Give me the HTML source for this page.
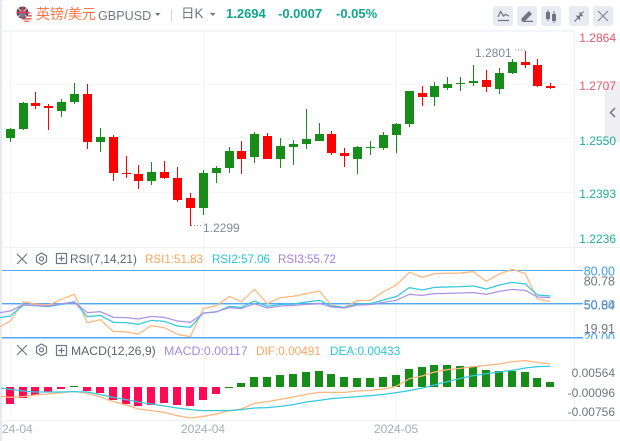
<!DOCTYPE html>
<html lang="zh">
<head>
<meta charset="utf-8">
<title>GBPUSD</title>
<style>
html,body{margin:0;padding:0;background:#fff;width:620px;height:441px;overflow:hidden}
svg{display:block;position:absolute;left:0;top:0}
text{font-family:"Liberation Sans","Noto Sans CJK SC",sans-serif;font-size:12px}
.c{shape-rendering:crispEdges}
.l{fill:none;stroke-width:1.25;vector-effect:non-scaling-stroke}
.i{fill:none;stroke:#6f7583;stroke-width:1.2}
</style>
</head>
<body>
<svg width="620" height="441" viewBox="0 0 620 441" xmlns="http://www.w3.org/2000/svg">
<rect width="620" height="441" fill="#fff"/>
<path d="M0 0H4Q2 0 2 4V441H0Z" fill="#e6e9f2"/>

<!-- grid -->
<g class="c" fill="#f4f5f8">
<rect x="10" y="30" width="1" height="390"/>
<rect x="203" y="30" width="1" height="390"/>
<rect x="396" y="30" width="1" height="390"/>
<rect x="3" y="30" width="571" height="2"/>
<rect x="3" y="84" width="571" height="1"/>
<rect x="3" y="138" width="571" height="1"/>
<rect x="3" y="192" width="571" height="1"/>
<rect x="3" y="247" width="617" height="1" fill="#eef0f4"/>
<rect x="3" y="420" width="617" height="1" fill="#eef0f4"/>
<rect x="574" y="30" width="1" height="390" fill="#eef0f4"/>
</g>

<!-- header -->
<g>
<clipPath id="f1"><circle cx="22.5" cy="12.5" r="6"/></clipPath>
<clipPath id="f2"><circle cx="26.5" cy="16.5" r="5.5"/></clipPath>
<g clip-path="url(#f2)"><rect x="20" y="10" width="14" height="13" fill="#fff"/><path d="M20 12h14v1.6H20zM20 15h14v1.6H20zM20 18h14v1.6H20zM20 20.6h14v1.6H20z" fill="#e0635f"/></g>
<g clip-path="url(#f1)"><rect x="16" y="6" width="13" height="13" fill="#3c4a78"/><path d="M16 6L29 19M29 6L16 19" stroke="#e8a9a9" stroke-width="1.5"/><path d="M22.5 6V19M16 12.5H29" stroke="#d9404a" stroke-width="2"/></g>
<rect x="20" y="13" width="5" height="4" fill="#6f7890"/>
<text x="36" y="19" style="font-size:14px" fill="#ff7547">英镑/美元</text>
<text x="98" y="20" style="font-size:12.6px" fill="#727785">GBPUSD</text>
<path d="M155 13h5.5l-2.750 3z" fill="#727785"/>
<rect x="171" y="9" width="1" height="12" fill="#ccd0d8" class="c"/>
<text x="181" y="18" style="font-size:13.5px" fill="#727785">日K</text>
<path d="M210 13h5.500l-2.750 3z" fill="#727785"/>
<text x="226" y="18" style="font-size:13px;font-weight:bold" fill="#0fa68c">1.2694</text>
<text x="278" y="18" style="font-size:13px;font-weight:bold" fill="#0fa68c">-0.0007</text>
<text x="336" y="18" style="font-size:13px;font-weight:bold" fill="#0fa68c">-0.05%</text>
</g>

<!-- toolbar -->
<g fill="#e9ebf2">
<rect x="493" y="6" width="20" height="20" rx="3"/>
<rect x="517" y="6" width="20" height="20" rx="3"/>
<rect x="541" y="6" width="20" height="20" rx="3"/>
<rect x="569" y="6" width="20" height="20" rx="3"/>
<rect x="593" y="6" width="20" height="20" rx="3"/>
</g>
<path class="i" d="M498 17l2.500-5.500 3 4.500 2-1.500 3.500 1.500M498 20.500h11"/>
<path d="M521.500 18.500l7.500-7.500 3 3-7.500 7.500h-3zM523 20.800h10v1.200h-10z" fill="#6f7583"/>
<path d="M546 12h4v7h-4zM547.500 10h1v11h-1zM552 14h4v7h-4zM553.500 11h1v12h-1z" fill="#6f7583"/>
<path d="M574.500 21.500l3.800-3.800M583.500 11.500l-3.600 3.600" fill="none" stroke="#6f7583" stroke-width="1.200"/>
<path d="M575.500 15.500l4.500 .2.300 4.800zM583.500 16.300l-4-.2-.2-4.600z" fill="#6f7583"/>
<path d="M598 11l10 10M608 11l-10 10" fill="none" stroke="#7b808d" stroke-width="1"/>

<!-- side handle -->
<path d="M605 85l4-4h11v61h-15z" fill="#eeeef3"/>
<path d="M615 108l-4.500 4.500 4.500 4.500" fill="none" stroke="#6f7583" stroke-width="1.500"/>

<!-- candles -->
<path class="c" fill="#188c18" d="
M10 128h1V142h-1zM6 129h9V138h-9z
M23 102h1V130h-1zM19 103h9V129h-9z
M61 99h1V117h-1zM57 102h9V111h-9z
M74 83h1V104h-1zM70 94h9V102h-9z
M100 128h1V152h-1zM96 137h9V142h-9z
M151 162h1V185h-1zM147 172h9V181h-9z
M203 170h1V215h-1zM199 173h9V208h-9z
M216 166h1V183h-1zM212 168h9V173h-9z
M229 147h1V173h-1zM225 151h9V168h-9z
M254 132h1V163h-1zM250 134h9V157h-9z
M280 138h1V168h-1zM276 146h9V159h-9z
M293 140h1V165h-1zM289 144h9V147h-9z
M306 109h1V149h-1zM302 139h9V144h-9z
M319 123h1V141h-1zM315 134h9V141h-9z
M357 146h1V174h-1zM353 147h9V159h-9z
M370 141h1V155h-1zM366 147h9V148h-9z
M383 132h1V150h-1zM379 135h9V148h-9z
M396 123h1V153h-1zM392 124h9V135h-9z
M409 91h1V127h-1zM405 91h9V124h-9z
M434 82h1V106h-1zM430 86h9V97h-9z
M447 77h1V90h-1zM443 84h9V88h-9z
M460 77h1V91h-1zM456 83h9V84h-9z
M473 65h1V86h-1zM469 81h9V83h-9z
M499 68h1V94h-1zM495 73h9V89h-9z
M512 59h1V74h-1zM508 62h9V73h-9z"/>
<path class="c" fill="#ff0000" d="
M35 92h1V109h-1zM31 103h9V106h-9z
M48 104h1V130h-1zM44 106h9V108h-9z
M87 84h1V149h-1zM83 94h9V142h-9z
M113 135h1V181h-1zM109 137h9V173h-9z
M126 156h1V178h-1zM122 173h9V174h-9z
M138 165h1V189h-1zM134 174h9V181h-9z
M164 161h1V179h-1zM160 172h9V178h-9z
M177 167h1V202h-1zM173 178h9V200h-9z
M190 193h1V226h-1zM186 198h9V208h-9z
M241 141h1V174h-1zM237 151h9V159h-9z
M267 133h1V159h-1zM263 136h9V159h-9z
M331 131h1V155h-1zM327 134h9V153h-9z
M344 148h1V167h-1zM340 153h9V156h-9z
M422 86h1V106h-1zM418 93h9V97h-9z
M486 70h1V92h-1zM482 80h9V87h-9z
M525 51h1V68h-1zM521 62h9V65h-9z
M537 59h1V87h-1zM533 65h9V86h-9z
M550 83h1V89h-1zM546 86h9V88h-9z"/>

<!-- price labels -->
<g text-anchor="end">
<text x="616" y="42" fill="#e2586c">1.2864</text>
<text x="616" y="90" fill="#e2586c">1.2707</text>
<text x="616" y="145" fill="#1faf96">1.2550</text>
<text x="616" y="198" fill="#1faf96">1.2393</text>
<text x="616" y="243" fill="#1faf96">1.2236</text>
</g>
<text x="475" y="57" fill="#83879a">1.2801</text>
<path d="M515 50h10" stroke="#8a8e9a" stroke-dasharray="1 2" fill="none"/>
<text x="203" y="232" fill="#83879a">1.2299</text>
<path d="M191 225.500h10" stroke="#8a8e9a" stroke-dasharray="1 2" fill="none"/>

<!-- RSI header -->
<path class="i" d="M17 254l10 10M27 254l-10 10"/>
<path class="i" d="M41.500 253l5 2.900v5.800l-5 2.900-5-2.900v-5.800z"/>
<circle cx="41.500" cy="258.800" r="2" class="i"/>
<rect x="56.500" y="253.500" width="10" height="10" class="i"/>
<path class="i" d="M58.500 258.500h6M61.500 255.500v6"/>
<text x="70" y="263" fill="#5d6270" style="font-size:11.800px">RSI(7,14,21)</text>
<text x="145" y="263" fill="#ffa45c" style="font-size:11.600px">RSI1:51.83</text>
<text x="212" y="263" fill="#26c6da" style="font-size:11.600px">RSI2:57.06</text>
<text x="278" y="263" fill="#9d7fe0" style="font-size:11.600px">RSI3:55.72</text>

<!-- RSI lines -->
<g class="c">
<rect x="2" y="270" width="581" height="1" fill="#52a8f2"/>
<rect x="2" y="303" width="581" height="1" fill="#52a8f2"/>
<rect x="2" y="304" width="581" height="1" fill="#b5daf9"/>
<rect x="2" y="337" width="581" height="1" fill="#52a8f2"/>
<rect x="2" y="338" width="581" height="1" fill="#a5d2f8"/>
</g>
<g transform="translate(0,245) scale(.33333)">
<polyline class="l" stroke="#ffb57d" points="0,245 31,228 70,170 106,177 145,180 184,163 223,148 262,233 301,224 340,259 379,261 415,267 454,242 493,248 532,268 571,275 610,191 649,182 688,154 724,170 763,133 802,176 841,158 880,154 919,146"/>
<polyline class="l" stroke="#35c8dc" points="0,218 31,213 70,180 106,182 145,185 184,178 223,170 262,215 301,211 340,232 379,233 415,238 454,226 493,229 532,243 571,247 610,204 649,201 688,184 724,187 763,168 802,184 841,178 880,177 919,171"/>
<polyline class="l" stroke="#ab92e4" points="0,203 31,198 70,179 106,181 145,183 184,176 223,172 262,203 301,200 340,217 379,218 415,222 454,214 493,217 532,228 571,232 610,205 649,200 688,188 724,191 763,176 802,189 841,183 880,181 919,178"/>
</g>
<g transform="translate(310,245) scale(.33333)">
<polyline class="l" stroke="#ffb57d" points="-11,146 28,138 64,180 103,187 142,167 181,166 220,140 259,120 298,82 337,97 373,86 412,85 451,84 490,80 529,109 568,87 607,73 646,86 682,162 721,170"/>
<polyline class="l" stroke="#35c8dc" points="-11,171 28,166 64,183 103,187 142,177 181,176 220,165 259,155 298,128 337,135 373,127 412,126 451,125 490,123 529,132 568,120 607,112 646,117 682,150 721,153"/>
<polyline class="l" stroke="#ab92e4" points="-11,178 28,175 64,186 103,189 142,180 181,179 220,172 259,166 298,148 337,151 373,146 412,145 451,144 490,143 529,148 568,139 607,133 646,136 682,156 721,158"/>
</g>

<!-- RSI labels -->
<clipPath id="r"><rect x="575" y="248" width="45" height="91"/></clipPath>
<g text-anchor="end" clip-path="url(#r)">
<text x="615" y="275.500" fill="#3d9df0" style="font-size:12.500px">80.00</text>
<text x="615" y="285.500" fill="#6f7583" style="font-size:12.500px">80.78</text>
<text x="615" y="309.500" fill="#6f7583" style="font-size:12.500px">50.84</text>
<text x="615" y="309" fill="#3d9df0" fill-opacity=".85" style="font-size:12.500px">50.00</text>
<text x="615" y="333" fill="#6f7583" style="font-size:12.500px">19.91</text>
<text x="615" y="342" fill="#3d9df0" style="font-size:12.500px">20.00</text>
</g>

<!-- MACD header -->
<path class="i" d="M17 345l10 10M27 345l-10 10"/>
<path class="i" d="M41.500 344l5 2.900v5.800l-5 2.900-5-2.900v-5.800z"/>
<circle cx="41.500" cy="349.800" r="2" class="i"/>
<rect x="56.500" y="345.500" width="10" height="10" class="i"/>
<path class="i" d="M58.500 350.500h6M61.500 347.500v6"/>
<text x="71" y="355" fill="#5d6270" style="font-size:12.200px">MACD(12,26,9)</text>
<text x="164" y="355" fill="#a48ae2" style="font-size:12.400px">MACD:0.00117</text>
<text x="256" y="355" fill="#ffa45c" style="font-size:11.800px">DIF:0.00491</text>
<text x="330" y="355" fill="#26c6da" style="font-size:11.800px">DEA:0.00433</text>

<!-- MACD bars -->
<path class="c" fill="#ff0a54" d="M6 387h8V404h-8zM19 387h8V398h-8zM31 387h8V395h-8zM44 387h8V392h-8zM57 387h8V389h-8zM83 387h8V391h-8zM96 387h8V393h-8zM109 387h8V400h-8zM122 387h8V404h-8zM134 387h8V406h-8zM147 387h8V405h-8zM160 387h8V403h-8zM173 387h8V405h-8zM186 387h8V406h-8zM199 387h8V400h-8zM212 387h8V394h-8z"/>
<path class="c" fill="#188c18" d="M70 386h8V387h-8zM225 387h8V388h-8zM237 383h8V387h-8zM250 377h8V387h-8zM263 377h8V387h-8zM276 375h8V387h-8zM289 374h8V387h-8zM302 372h8V387h-8zM315 371h8V387h-8zM327 374h8V387h-8zM340 377h8V387h-8zM353 378h8V387h-8zM366 378h8V387h-8zM379 377h8V387h-8zM392 375h8V387h-8zM405 369h8V387h-8zM418 367h8V387h-8zM430 365h8V387h-8zM443 365h8V387h-8zM456 366h8V387h-8zM469 367h8V387h-8zM482 370h8V387h-8zM495 371h8V387h-8zM508 371h8V387h-8zM521 372h8V387h-8zM533 378h8V387h-8zM546 382h8V387h-8z"/>
<g transform="translate(0,340) scale(.33333)">
<polyline class="l" stroke="#ffb57d" points="3,169 31,172 70,170 106,165 145,162 184,158 223,154 262,160 301,171 340,185 379,195 415,207 454,212 493,217 532,227 571,234 610,229 649,222 688,212 724,207 763,190 802,185 841,178 880,171 919,163"/>
<polyline class="l" stroke="#35c8dc" points="3,144 31,148 70,153 106,156 145,156 184,156 223,155 262,156 301,164 340,172 379,179 415,186 454,192 493,198 532,204 571,209 610,212 649,212 688,212 724,209 763,204 802,203 841,199 880,194 919,186"/>
</g>
<g transform="translate(310,340) scale(.33333)">
<polyline class="l" stroke="#ffb57d" points="-11,163 28,157 64,157 103,157 142,153 181,151 220,147 259,139 298,116 337,108 373,96 412,89 451,85 490,80 529,76 568,72 607,65 646,62 682,67 721,72"/>
<polyline class="l" stroke="#35c8dc" points="-11,186 28,181 64,176 103,173 142,170 181,167 220,163 259,158 298,152 337,144 373,135 412,125 451,115 490,107 529,101 568,96 607,91 646,84 682,80 721,79"/>
</g>

<!-- MACD labels -->
<g text-anchor="end">
<text x="615" y="377" fill="#6f7583">0.00564</text>
<text x="615" y="397" fill="#6f7583">-0.00096</text>
<text x="615" y="416" fill="#6f7583">-0.00756</text>
</g>

<!-- date axis -->
<text x="2" y="433" fill="#a8abb5">24-04</text>
<text x="181" y="433" fill="#a8abb5">2024-04</text>
<text x="374" y="433" fill="#a8abb5">2024-05</text>
</svg>
</body>
</html>
